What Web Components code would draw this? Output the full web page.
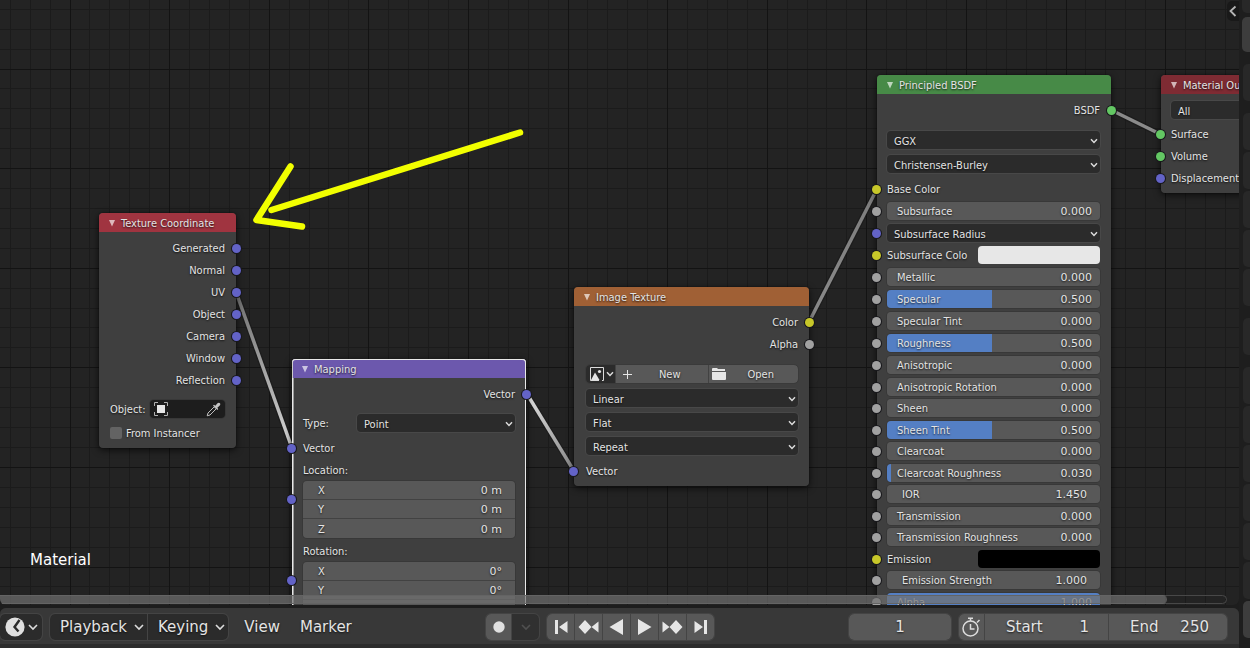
<!DOCTYPE html>
<html lang="en">
<head>
<meta charset="utf-8">
<title>Shader Editor</title>
<style>
  html, body {
    height: 100%;
    margin: 0;
  }

  body {
    display: flex;
    background: #1d1d1d;
    color: #e4e4e4;
    font: 11px/18px "DejaVu Sans Condensed", "DejaVu Sans", sans-serif;
    overflow: hidden;
  }

  main {
    flex: 1;
    min-width: 0;
    display: flex;
    flex-direction: column;
    gap: 3px;
  }

  node-editor {
    flex: 1;
    min-height: 0;
  }

  /* vertical rhythm inside the nodes */
  .sec { margin-top: 7px; }
  .sec-s { margin-top: 6px; }
  .gap { margin-top: 2px; }

  .inputs {
    display: grid;
    grid-template-rows: repeat(9, 22px) repeat(6, 21px 22px);
  }

  .inputs > socket-row { height: auto; }
</style>
</head>
<body>

<main>
  <node-editor>
    <node-link slot="links" x1="236" y1="292" x2="292" y2="448" from="#6e6e6e" to="#d8d8d8"></node-link>
    <node-link slot="links" x1="527" y1="394" x2="574" y2="471" from="#e0e0e0" to="#858585"></node-link>
    <node-link slot="links" x1="809" y1="322" x2="877" y2="189" from="#8a8a8a" to="#7d7d7d"></node-link>
    <node-link slot="links" x1="1111" y1="110" x2="1160" y2="134" from="#8a8a8a" to="#8a8a8a"></node-link>

    <shader-node label="Texture Coordinate" style="left: 99px; top: 213px; width: 137px; --head: #a03440; --pad: 3px">
      <socket-row out>Generated</socket-row>
      <socket-row out>Normal</socket-row>
      <socket-row out>UV</socket-row>
      <socket-row out>Object</socket-row>
      <socket-row out>Camera</socket-row>
      <socket-row out>Window</socket-row>
      <socket-row out>Reflection</socket-row>
      <object-picker class="sec-s" label="Object:"></object-picker>
      <check-box label="From Instancer"></check-box>
    </shader-node>

    <shader-node selected label="Mapping" style="left: 292px; top: 359px; width: 234px; --head: #6c58ad">
      <socket-row out>Vector</socket-row>
      <drop-down class="sec-s" label="Type:" value="Point"></drop-down>
      <socket-row class="gap">Vector</socket-row>
      <vector-field label="Location:" value="0 m"></vector-field>
      <vector-field class="gap" label="Rotation:" value="0°"></vector-field>
    </shader-node>

    <shader-node label="Image Texture" style="left: 574px; top: 287px; width: 235px; --head: #a06035; --left: 12px">
      <socket-row out color="#c7c729">Color</socket-row>
      <socket-row out color="#a1a1a1">Alpha</socket-row>
      <image-picker class="sec"></image-picker>
      <drop-down value="Linear"></drop-down>
      <drop-down value="Flat"></drop-down>
      <drop-down value="Repeat"></drop-down>
      <socket-row class="gap">Vector</socket-row>
    </shader-node>

    <shader-node label="Principled BSDF" style="left: 877px; top: 75px; width: 234px; --head: #478a47; --left: 10px">
      <socket-row out color="#63c763">BSDF</socket-row>
      <drop-down class="sec" value="GGX"></drop-down>
      <drop-down value="Christensen-Burley"></drop-down>
      <div class="inputs gap">
        <socket-row color="#c7c729">Base Color</socket-row>
        <socket-row color="#a1a1a1"><value-slider label="Subsurface" value="0.000"></value-slider></socket-row>
        <socket-row><drop-down value="Subsurface Radius"></drop-down></socket-row>
        <socket-row color="#c7c729"><color-field label="Subsurface Colo" value="#e7e7e7"></color-field></socket-row>
        <socket-row color="#a1a1a1"><value-slider label="Metallic" value="0.000"></value-slider></socket-row>
        <socket-row color="#a1a1a1"><value-slider label="Specular" value="0.500"></value-slider></socket-row>
        <socket-row color="#a1a1a1"><value-slider label="Specular Tint" value="0.000"></value-slider></socket-row>
        <socket-row color="#a1a1a1"><value-slider label="Roughness" value="0.500"></value-slider></socket-row>
        <socket-row color="#a1a1a1"><value-slider label="Anisotropic" value="0.000"></value-slider></socket-row>
        <socket-row color="#a1a1a1"><value-slider label="Anisotropic Rotation" value="0.000"></value-slider></socket-row>
        <socket-row color="#a1a1a1"><value-slider label="Sheen" value="0.000"></value-slider></socket-row>
        <socket-row color="#a1a1a1"><value-slider label="Sheen Tint" value="0.500"></value-slider></socket-row>
        <socket-row color="#a1a1a1"><value-slider label="Clearcoat" value="0.000"></value-slider></socket-row>
        <socket-row color="#a1a1a1"><value-slider label="Clearcoat Roughness" value="0.030"></value-slider></socket-row>
        <socket-row color="#a1a1a1"><value-slider unbounded label="IOR" value="1.450"></value-slider></socket-row>
        <socket-row color="#a1a1a1"><value-slider label="Transmission" value="0.000"></value-slider></socket-row>
        <socket-row color="#a1a1a1"><value-slider label="Transmission Roughness" value="0.000"></value-slider></socket-row>
        <socket-row color="#c7c729"><color-field label="Emission" value="#000000"></color-field></socket-row>
        <socket-row color="#a1a1a1"><value-slider unbounded label="Emission Strength" value="1.000"></value-slider></socket-row>
        <socket-row color="#a1a1a1"><value-slider label="Alpha" value="1.000"></value-slider></socket-row>
      </div>
    </shader-node>

    <shader-node label="Material Output" style="left: 1161px; top: 75px; width: 140px; --head: #7e2b33; --left: 10px">
      <drop-down compact value="All"></drop-down>
      <socket-row class="gap" color="#63c763">Surface</socket-row>
      <socket-row color="#63c763">Volume</socket-row>
      <socket-row>Displacement</socket-row>
    </shader-node>
  </node-editor>

  <time-line></time-line>
</main>

<side-tabs></side-tabs>

<script>
const CHEVRON = '<svg class="chev" width="8" height="6" viewBox="0 0 8 6"><path d="M1 1.3 4 4.4 7 1.3" fill="none" stroke="#dcdcdc" stroke-width="1.5"/></svg>';

const FIELD = `
  * { box-sizing: border-box; }
  button, input, select {
    font: inherit;
    color: inherit;
    margin: 0;
    padding: 0;
    border: 0;
    background: none;
    outline: none;
    text-shadow: inherit;
    appearance: none;
  }
`;

class NodeEditor extends HTMLElement {
  constructor() {
    super();
    this.attachShadow({ mode: 'open' });
    this.shadowRoot.innerHTML = `
      <style>
        ${FIELD}
        :host {
          display: block;
          position: relative;
          overflow: hidden;
          background: #232323;
          border-radius: 0 0 6px 6px;
        }
        svg { display: block; }
        #grid, #arrow { position: absolute; left: 0; top: 0; }
        #material {
          position: absolute;
          left: 30px;
          bottom: 36px;
          font: 15px/18px "DejaVu Sans", sans-serif;
          color: #fff;
        }
        #toggle {
          position: absolute;
          right: 0;
          top: 1px;
          width: 12px;
          height: 20px;
          background: #191919;
          border-radius: 5px 0 0 5px;
        }
        #scroll {
          position: absolute;
          left: -6px;
          right: 12px;
          bottom: 1px;
          height: 9px;
          border: 1px solid #484848;
          border-radius: 5px;
        }
        #thumb {
          width: 95.2%;
          height: 9px;
          margin-top: -1px;
          border-radius: 5px;
          background: rgba(112, 112, 112, 0.7);
        }
      </style>
      <svg id="grid" width="2600" height="1600"></svg>
      <slot name="links"></slot>
      <slot></slot>
      <svg id="arrow" width="540" height="240" fill="none" stroke="#f2ff00" stroke-width="6.5" stroke-linecap="round" stroke-linejoin="round">
        <path d="M520 132.500 271.500 210M290.500 166.500 256.500 220 302 226.500"/>
      </svg>
      <span id="material">Material</span>
      <button id="toggle" aria-label="Show sidebar">
        <svg width="12" height="20"><path d="M8.500 5.500 3.500 10 8.500 15" fill="none" stroke="#b5b5b5" stroke-width="1.8"/></svg>
      </button>
      <div id="scroll"><div id="thumb"></div></div>
    `;
    this.drawGrid();
  }

  drawGrid() {
    const step = 99.6 / 5;
    let minor = '';
    let major = '';
    for (let i = -4; i < 130; i++) {
      const x = Math.round(69.5 + i * step);
      const y = Math.round(68.5 + i * step);
      const d = `M${x}.5 0V1600M0 ${y}.5H2600`;
      if (i % 5 === 0) major += d;
      else minor += d;
    }
    this.shadowRoot.getElementById('grid').innerHTML =
      `<path d="${minor}" stroke="#1b1b1b"/><path d="${major}" stroke="#131313"/>`;
  }
}

let linkCount = 0;

class NodeLink extends HTMLElement {
  constructor() {
    super();
    this.attachShadow({ mode: 'open' });
  }

  connectedCallback() {
    const [x1, y1, x2, y2] = ['x1', 'y1', 'x2', 'y2'].map(n => Number(this.getAttribute(n)));
    const id = 'g' + linkCount++;
    const line = `x1="${x1}" y1="${y1}" x2="${x2}" y2="${y2}"`;
    this.shadowRoot.innerHTML = `
      <style>
        :host { position: absolute; left: 0; top: 0; }
        svg { display: block; overflow: visible; }
      </style>
      <svg width="1" height="1">
        <linearGradient id="${id}" gradientUnits="userSpaceOnUse" ${line}>
          <stop stop-color="${this.getAttribute('from')}"/>
          <stop offset="1" stop-color="${this.getAttribute('to')}"/>
        </linearGradient>
        <line ${line} stroke="#151515" stroke-opacity="0.5" stroke-width="6"/>
        <line ${line} stroke="url(#${id})" stroke-width="3.5"/>
      </svg>
    `;
  }
}

class ShaderNode extends HTMLElement {
  constructor() {
    super();
    this.attachShadow({ mode: 'open' });
    this.shadowRoot.innerHTML = `
      <style>
        :host {
          --left: 11px;
          --right: 11px;
          position: absolute;
          display: block;
          border-radius: 4px;
          background: rgba(65, 65, 65, 0.95);
          box-shadow: 0 2px 7px rgba(0, 0, 0, 0.7), 0 0 1px #000;
          text-shadow: 0 1px 2px rgba(0, 0, 0, 0.8);
        }
        :host([selected]) {
          box-shadow: 0 2px 7px rgba(0, 0, 0, 0.7), inset 0 0 0 1px #e8e8e8, inset 2px 0 0 #999;
        }
        header {
          box-sizing: border-box;
          display: flex;
          align-items: center;
          gap: 5px;
          height: 19px;
          padding: 2px 9px 0;
          border-radius: 4px 4px 0 0;
          background: var(--head);
        }
        :host([selected]) header {
          box-shadow: inset 0 1px #e8e8e8, inset 1px 0 #ccc, inset -1px 0 #e8e8e8;
        }
        header svg { flex: none; }
        header span { white-space: nowrap; }
        section {
          display: flex;
          flex-direction: column;
          padding: 5px var(--right) var(--pad, 4px) var(--left);
        }
      </style>
      <header>
        <svg width="8" height="8"><path d="M1 0H7L4 6.500Z" fill="#fff" fill-opacity="0.65"/></svg>
        <span></span>
      </header>
      <section><slot></slot></section>
    `;
  }

  connectedCallback() {
    this.shadowRoot.querySelector('header span').textContent = this.getAttribute('label');
  }
}

class SocketRow extends HTMLElement {
  constructor() {
    super();
    this.attachShadow({ mode: 'open' });
    this.shadowRoot.innerHTML = `
      <style>
        :host {
          position: relative;
          box-sizing: border-box;
          display: flex;
          align-items: center;
          height: 22px;
          padding-top: 2px;
          white-space: nowrap;
        }
        :host([out]) { justify-content: flex-end; }
        i {
          position: absolute;
          top: 50%;
          left: calc(0px - var(--left));
          width: 9px;
          height: 9px;
          margin: -4px 0 0 -5px;
          border-radius: 50%;
          background: var(--dot, #6363c7);
          box-shadow: 0 0 0 1px #18181c;
        }
        :host([out]) i {
          left: auto;
          right: calc(0px - var(--right));
          margin: -4px -5px 0 0;
        }
        /* fields fill the row, only bare text sits on the lowered line */
        ::slotted(*) { flex: 1; margin-top: -2px; }
      </style>
      <slot></slot><i></i>
    `;
  }

  connectedCallback() {
    const color = this.getAttribute('color');
    if (color) this.shadowRoot.querySelector('i').style.setProperty('--dot', color);
  }
}

class DropDown extends HTMLElement {
  constructor() {
    super();
    this.attachShadow({ mode: 'open' });
  }

  connectedCallback() {
    const label = this.getAttribute('label');
    const value = this.getAttribute('value');
    this.shadowRoot.innerHTML = `
      <style>
        ${FIELD}
        :host { display: flex; align-items: center; height: 24px; }
        :host([compact]) { height: 22px; }
        label { width: 54px; padding-top: 2px; }
        div { position: relative; flex: 1; }
        select {
          display: block;
          width: 100%;
          height: 18px;
          padding: 2px 7px 0;
          border-radius: 4px;
          background: #2b2b2b;
          box-shadow: 0 0 0 1px #484848;
        }
        .chev { position: absolute; right: 2px; top: 7px; pointer-events: none; }
      </style>
      ${label ? `<label for="s">${label}</label>` : ''}
      <div><select id="s" aria-label="${label || value}"><option>${value}</option></select>${CHEVRON}</div>
    `;
  }
}

class ValueSlider extends HTMLElement {
  constructor() {
    super();
    this.attachShadow({ mode: 'open' });
  }

  connectedCallback() {
    const value = this.getAttribute('value');
    const fill = this.hasAttribute('unbounded') ? 0 : Math.round(Number(value) * 213);
    // half-full sliders stop slightly short of the middle
    const stop = fill > 60 && fill < 200 ? fill - 2 : fill && fill < 60 ? 4 : fill;
    this.shadowRoot.innerHTML = `
      <style>
        ${FIELD}
        :host { display: block; }
        label {
          display: flex;
          align-items: center;
          height: 18px;
          padding: 2px 8px 0 10px;
          border-radius: 4px;
          background: linear-gradient(90deg, #547fc4 ${stop}px, #585858 ${stop}px);
          box-shadow: 0 0 0 1px #383838;
        }
        :host([unbounded]) label { padding: 2px 13px 0 15px; }
        span { flex: 1; }
        input { width: 50px; height: 16px; text-align: right; font-family: "DejaVu Sans", sans-serif; }
      </style>
      <label><span>${this.getAttribute('label')}</span><input value="${value}"></label>
    `;
  }
}

class ColorField extends HTMLElement {
  constructor() {
    super();
    this.attachShadow({ mode: 'open' });
  }

  connectedCallback() {
    this.shadowRoot.innerHTML = `
      <style>
        ${FIELD}
        :host { display: flex; align-items: center; justify-content: space-between; height: 18px; }
        label { padding-top: 2px; }
        button {
          width: 122px;
          height: 18px;
          border-radius: 4px;
          background: ${this.getAttribute('value')};
        }
      </style>
      <label for="c">${this.getAttribute('label')}</label>
      <button id="c"></button>
    `;
  }
}

class VectorField extends HTMLElement {
  constructor() {
    super();
    this.attachShadow({ mode: 'open' });
  }

  connectedCallback() {
    const value = this.getAttribute('value');
    const axes = ['X', 'Y', 'Z'].map(a => `<label><span>${a}</span><input value="${value}"></label>`).join('');
    this.shadowRoot.innerHTML = `
      <style>
        ${FIELD}
        :host { display: block; }
        p { height: 22px; margin: 0; line-height: 24px; }
        div {
          position: relative;
          display: flex;
          flex-direction: column;
          gap: 1px;
          border-radius: 4px;
          background: #424242;
          box-shadow: 0 0 0 1px #383838;
        }
        label {
          display: flex;
          align-items: center;
          height: 18px;
          padding: 2px 13px 0 15px;
          background: #585858;
        }
        label:first-child { border-radius: 4px 4px 0 0; }
        label:nth-child(3) { height: 19px; border-radius: 0 0 4px 4px; }
        span { flex: 1; }
        input { width: 80px; height: 16px; text-align: right; font-family: "DejaVu Sans", sans-serif; }
        i {
          position: absolute;
          left: calc(0px - var(--left) - 5px);
          top: 14px;
          width: 9px;
          height: 9px;
          border-radius: 50%;
          background: #6363c7;
          box-shadow: 0 0 0 1px #18181c;
        }
      </style>
      <p>${this.getAttribute('label')}</p>
      <div>${axes}<i></i></div>
    `;
  }
}

class ObjectPicker extends HTMLElement {
  constructor() {
    super();
    this.attachShadow({ mode: 'open' });
    this.shadowRoot.innerHTML = `
      <style>
        ${FIELD}
        :host { display: flex; align-items: center; gap: 4px; height: 24px; }
        label { padding-top: 2px; }
        button {
          flex: 1;
          display: flex;
          align-items: center;
          justify-content: space-between;
          height: 18px;
          padding: 0 4px;
          border-radius: 4px;
          background: #1d1d1d;
          box-shadow: 0 0 0 1px #383838;
        }
      </style>
      <label for="o">${this.getAttribute('label') || 'Object:'}</label>
      <button id="o">
        <svg width="14" height="14" fill="none" stroke="#b0b0b0">
          <path d="M.5 4V.5H4M10 .5H13.500V4M13.500 10V13.500H10M4 13.500H.5V10"/>
          <path d="M3 3H11V11H3Z" fill="#e6e6e6" stroke="none"/>
        </svg>
        <svg width="15" height="15" viewBox="0 0 15 15">
          <path d="M1.200 13.800 2 11 8.200 4.800 10.200 6.800 4 13Z" fill="none" stroke="#c0c0c0"/>
          <path d="M7 3.600 8 2.800 9.300 3.800 11.500 1.200Q13 .2 14 1.300 14.800 2.400 13.800 3.500L11.300 5.700 12.200 7 11.400 8Z" fill="#c4c4c4"/>
        </svg>
      </button>
    `;
  }
}

class CheckBox extends HTMLElement {
  constructor() {
    super();
    this.attachShadow({ mode: 'open' });
  }

  connectedCallback() {
    this.shadowRoot.innerHTML = `
      <style>
        ${FIELD}
        :host { display: block; height: 24px; }
        label { display: flex; align-items: center; gap: 4px; height: 24px; white-space: nowrap; }
        span { padding-top: 2px; }
        input {
          width: 12px;
          height: 12px;
          border-radius: 2px;
          background: #636363;
        }
      </style>
      <label><input type="checkbox"><span>${this.getAttribute('label')}</span></label>
    `;
  }
}

class ImagePicker extends HTMLElement {
  constructor() {
    super();
    this.attachShadow({ mode: 'open' });
    this.shadowRoot.innerHTML = `
      <style>
        ${FIELD}
        :host { display: flex; align-items: center; height: 24px; }
        div {
          flex: 1;
          display: flex;
          gap: 1px;
          height: 18px;
          border-radius: 4px;
          overflow: hidden;
          background: #424242;
          outline: 1px solid #3a3a3a;
        }
        button {
          flex: 1;
          display: flex;
          align-items: center;
          padding: 0 2px 0 3px;
          background: #585858;
        }
        #browse { flex: none; gap: 2px; width: 29px; padding: 0 2px 0 4px; background: #2b2b2b; }
        svg { flex: none; }
        span { flex: 1; padding-top: 2px; text-align: center; }
        #new { padding: 0 0 0 7px; }
      </style>
      <div>
        <button id="browse" aria-label="Browse image">
          <svg width="14" height="14">
            <path d="M9 13.500H.5V.5H13.500V13.500H12" fill="none" stroke="#dcdcdc"/>
            <path d="M1 13 5 5.500 9.500 13Z" fill="#e6e6e6"/>
            <circle cx="9.500" cy="4.500" r="1.600" fill="#e6e6e6"/>
          </svg>
          ${CHEVRON}
        </button>
        <button id="new">
          <svg width="9" height="9"><path d="M4.500 0V9M0 4.500H9" stroke="#e6e6e6"/></svg>
          <span>New</span>
        </button>
        <button>
          <svg width="14" height="14"><path d="M0 4V2Q0 1 1 1H5L6 2H13V4ZM0 5H14V12Q14 13 13 13H1Q0 13 0 12Z" fill="#e6e6e6"/></svg>
          <span>Open</span>
        </button>
      </div>
    `;
  }
}

class TimeLine extends HTMLElement {
  constructor() {
    super();
    this.attachShadow({ mode: 'open' });
    this.shadowRoot.innerHTML = `
      <style>
        ${FIELD}
        :host {
          display: block;
          padding-bottom: 4px;
          background: #2c2c2c;
          border-radius: 6px 6px 0 0;
          font: 15px/26px "DejaVu Sans", sans-serif;
          text-shadow: 0 1px 2px rgba(0, 0, 0, 0.7);
        }
        nav {
          display: flex;
          justify-content: space-between;
          height: 36px;
          padding: 6px 12px 4px 0;
          background: #383838;
          border-radius: 6px 6px 0 0;
        }
        .set { display: flex; gap: 8px; }
        .group {
          display: flex;
          gap: 1px;
          height: 26px;
          border-radius: 5px;
          overflow: hidden;
          background: #444;
          outline: 1px solid #444;
        }
        button, label {
          display: flex;
          align-items: center;
          justify-content: center;
          height: 26px;
          background: #585858;
          white-space: nowrap;
        }
        svg { flex: none; display: block; }
        .menu { gap: 7px; padding: 0 3px 0 10px; background: #2b2b2b; }
        .editor { width: 42px; gap: 3px; padding: 0; border-radius: 0 5px 5px 0; }
        .plain { background: none; padding: 0 6px 0 8px; }
        .plain + .plain { padding: 0 0 0 6px; }
        .key { width: 27px; }
        .rec { width: 25px; }
        .group input { text-align: right; width: 44px; }
        #now { width: 102px; text-align: center; }
        .start { width: 123px; padding: 0 19px 0 21px; justify-content: space-between; }
        .end { width: 118px; padding: 0 18px 0 21px; justify-content: space-between; }
        .end input { width: 32px; }
      </style>
      <nav>
        <div class="set">
          <div class="group">
            <button class="menu editor" aria-label="Editor type">
              <svg width="20" height="20">
                <circle cx="10" cy="10" r="9.600" fill="#e0e0e0"/>
                <path d="M14.500 3 9.500 10 13.500 14.500" fill="none" stroke="#2b2b2b" stroke-width="2.400"/>
              </svg>
              <svg width="10" height="8"><path d="M1 2 5 6 9 2" fill="none" stroke="#dcdcdc" stroke-width="1.600"/></svg>
            </button>
          </div>
          <div class="group">
            <button class="menu">Playback <svg width="10" height="8"><path d="M1 2 5 6 9 2" fill="none" stroke="#dcdcdc" stroke-width="1.600"/></svg></button>
            <button class="menu">Keying <svg width="10" height="8"><path d="M1 2 5 6 9 2" fill="none" stroke="#dcdcdc" stroke-width="1.600"/></svg></button>
          </div>
          <button class="plain">View</button>
          <button class="plain">Marker</button>
        </div>

        <div class="set">
          <div class="group">
            <button class="rec" aria-label="Auto keying"><svg width="12" height="12"><circle cx="6" cy="6" r="5.700" fill="#e0e0e0"/></svg></button>
            <button class="key" style="background: #303030" aria-label="Auto keying options"><svg width="10" height="8"><path d="M1 2 5 6 9 2" fill="none" stroke="#505050" stroke-width="1.600"/></svg></button>
          </div>
          <div class="group">
            <button class="key" aria-label="Jump to start"><svg width="14" height="14" fill="#e6e6e6"><path d="M1 0H4V14H1ZM13.500 1V13L5 7Z"/></svg></button>
            <button class="key" aria-label="Previous keyframe"><svg width="21" height="14" fill="#e6e6e6"><path d="M7 0 13.500 7 7 14 .5 7ZM20.500 1.500V12.500L13.500 7Z"/></svg></button>
            <button class="key" aria-label="Play backwards"><svg width="15" height="18" fill="#e6e6e6"><path d="M14 1V17L.5 9Z"/></svg></button>
            <button class="key" aria-label="Play"><svg width="15" height="18" fill="#e6e6e6"><path d="M1 1V17L14.500 9Z"/></svg></button>
            <button class="key" aria-label="Next keyframe"><svg width="21" height="14" fill="#e6e6e6"><path d="M14 0 20.500 7 14 14 7.500 7ZM.5 1.500V12.500L7.500 7Z"/></svg></button>
            <button class="key" aria-label="Jump to end"><svg width="14" height="14" fill="#e6e6e6"><path d="M13 0H10V14H13ZM.5 1V13L9 7Z"/></svg></button>
          </div>
        </div>

        <div class="set">
          <div class="group"><label><input id="now" aria-label="Current frame" value="1"></label></div>
          <div class="group">
            <button class="rec" aria-label="Use preview range">
              <svg width="20" height="20" fill="none" stroke="#dcdcdc" stroke-width="1.500">
                <circle cx="9.500" cy="11.500" r="7.500"/>
                <path d="M9.500 7V12H13.500M7 1.200H12M9.500 1V4M16 5.500 18.500 3"/>
              </svg>
            </button>
            <label class="start">Start <input value="1"></label>
            <label class="end">End <input value="250"></label>
          </div>
        </div>
      </nav>
    `;
    this.shadowRoot.getElementById('now').style.width = '102px';
  }
}

class SideTabs extends HTMLElement {
  constructor() {
    super();
    this.attachShadow({ mode: 'open' });
    // extra space above the tabs that start a new group
    const gaps = ['', 'active', 'wide', 'wide', '', '', '', '', 'wide', 'wide', '', '', '', '', '', 'active'];
    this.shadowRoot.innerHTML = `
      <style>
        :host {
          display: flex;
          flex-direction: column;
          gap: 2px;
          width: 8px;
          padding-left: 3px;
          overflow: hidden;
          background: #1e1e1e;
        }
        i {
          flex: none;
          width: 16px;
          height: 37px;
          margin-left: 1px;
          border-radius: 5px 0 0 5px;
          background: #282828;
        }
        .wide { margin-top: 10px; }
        .active { background: #3d3d3d; }
        i:first-of-type { height: 13px; margin: 0; border-radius: 0 0 0 5px; }
        i:nth-of-type(2) { height: 35px; margin: 2px 0 0; }
      </style>
      ${gaps.map(g => `<i class="${g}"></i>`).join('')}
    `;
  }
}

customElements.define('node-editor', NodeEditor);
customElements.define('node-link', NodeLink);
customElements.define('shader-node', ShaderNode);
customElements.define('socket-row', SocketRow);
customElements.define('drop-down', DropDown);
customElements.define('value-slider', ValueSlider);
customElements.define('color-field', ColorField);
customElements.define('vector-field', VectorField);
customElements.define('object-picker', ObjectPicker);
customElements.define('check-box', CheckBox);
customElements.define('image-picker', ImagePicker);
customElements.define('time-line', TimeLine);
customElements.define('side-tabs', SideTabs);
</script>
</body>
</html>
